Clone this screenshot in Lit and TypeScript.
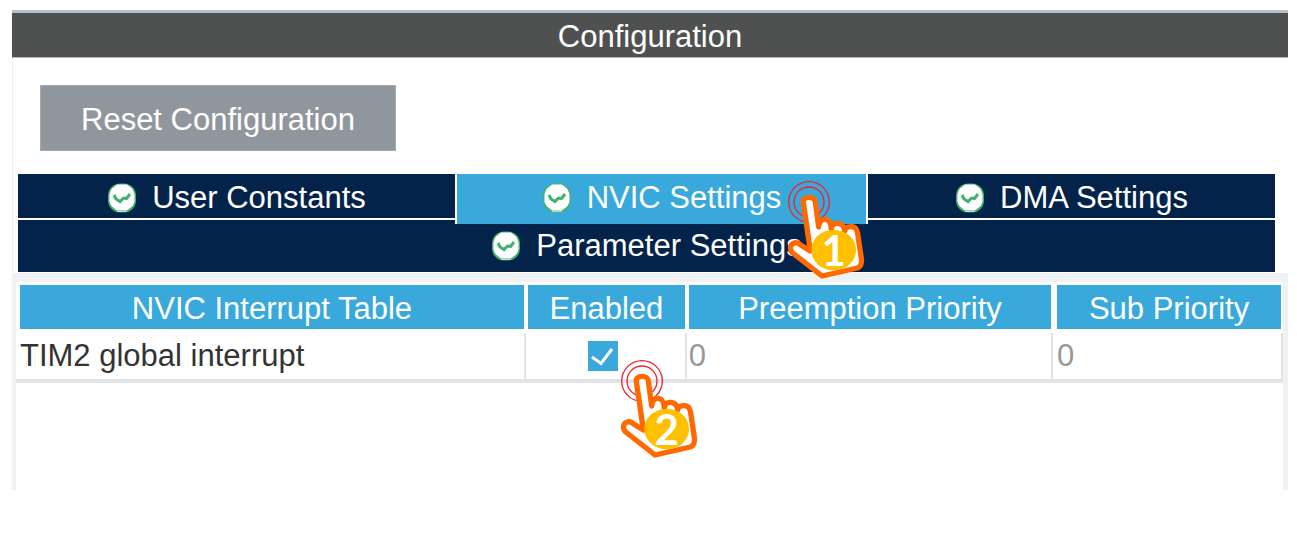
import { LitElement, html, css, svg } from "lit";
import { customElement, property, state } from "lit/decorators.js";
import { classMap } from "lit/directives/class-map.js";

/* Round green badge with a tick, shown before each tab label. */
@customElement("status-badge")
class StatusBadge extends LitElement {
  static styles = css`
    :host { display: block; width: 30px; height: 30px; flex: none; }
    svg { display: block; width: 100%; height: 100%; }
  `;
  render() {
    return html`<svg viewBox="0 0 30 30" aria-hidden="true">
      <rect x="1" y="0.500" width="28" height="29" rx="12" fill="#45b06a" />
      <path d="M10 2h10l5 4 2 5v8l-2 4-5 4H10l-5-4-2-4v-8l2-5z" fill="#fff" stroke="#fff" stroke-linejoin="round" />
      <path d="M7 12l2 4 4 2.500 3.500-3.500 3 .5 3.500-4.500" fill="none" stroke="#45b06a" stroke-width="3" />
      <path d="M10 28h10" stroke="#a9dcb9" stroke-width="2" />
    </svg>`;
  }
}

/* Pointing hand with a numbered disc, marking one step of the walkthrough. */
@customElement("step-pointer")
class StepPointer extends LitElement {
  @property() step = "";
  static styles = css`
    :host { display: block; width: 78px; height: 100px; pointer-events: none; }
    svg { display: block; width: 100%; height: 100%; overflow: visible; }
    .ring { fill: none; stroke: #f0202c; stroke-width: 4; }
    .hand { fill: #fff; stroke: #ff6900; stroke-width: 16; stroke-linejoin: round; }
    .disc { fill: #ffc000; }
    .digit { fill: #fff; font: 700 126px Lato, "Open Sans", sans-serif; text-anchor: middle; }
  `;
  render() {
    return html`<svg viewBox="0 0 234 300" role="img" aria-label="Step ${this.step}">
      ${svg`
        <circle class="ring" cx="63" cy="63" r="61"></circle>
        <circle class="ring" cx="63" cy="63" r="45"></circle>
        <path class="hand" d="M67 210L46 65C44 55 52 49 63 49C74 49 81 55 82 63L92 138C92 122 102 114 112 115C124 116 129 124 130 146C130 132 138 126 150 127C162 128 169 136 170 150C171 140 180 136 192 137C203 138 207 145 209 158L220 232C222 248 218 257 208 261L102 285L14 216C4 206 6 192 16 187C24 183 32 186 38 192Z"></path>
        <ellipse class="disc" cx="137" cy="207" rx="67" ry="61"></ellipse>
        <text class="digit" x="137" y="256">${this.step}</text>
      `}
    </svg>`;
  }
}

const TABS = ["User Constants", "NVIC Settings", "DMA Settings", "Parameter Settings"];

@customElement("app-root")
class AppRoot extends LitElement {
  @state() private active = 1;
  @state() private enabled = true;

  static styles = css`
    :host {
      display: flex;
      box-sizing: border-box;
      min-height: 100vh;
      padding: 10px 9px 45px 12px;
      background: #fff;
      font-family: "Liberation Sans", Arial, sans-serif;
      font-size: 31px;
      line-height: 36px;
      color: #333;
    }
    * { box-sizing: border-box; }
    .panel { flex: 1; min-width: 0; display: flex; flex-direction: column; }
    .title {
      margin: 0;
      padding: 6px 0 2px;
      border-top: 3px solid #b3c1c9;
      border-bottom: 1px solid #b5b6b6;
      background: #4f5150;
      color: #fff;
      font-size: 31px;
      font-weight: 400;
      text-align: center;
    }
    .toolbar { padding: 27px 27px 23px; border-left: 1px solid #f0f0f0; }
    .reset {
      display: block;
      padding: 16px 40px 12px;
      border: 1px solid #a4abb0;
      background: #8f979d;
      color: #fff;
      font: inherit;
    }
    .tabs {
      display: grid;
      grid-template-columns: 437fr 413fr 407fr;
      grid-template-rows: 44px 52px;
      row-gap: 2px;
      padding: 0 13px 1px 5px;
      border-left: 1px solid #f0f0f0;
    }
    .slot { position: relative; display: flex; }
    .slot.active { z-index: 1; margin-bottom: -6px; }
    .slot.wide { grid-column: 1 / -1; }
    .tab {
      flex: 1;
      display: flex;
      align-items: center;
      justify-content: center;
      gap: 15px;
      padding: 4px 0 0;
      border: 0;
      background: #03234b;
      color: #fff;
      font: inherit;
    }
    .active .tab {
      padding-bottom: 6px;
      border: solid #fff;
      border-width: 0 2px;
      background: #39a9dc;
    }
    .wide .tab { padding-top: 0; }
    .on-tab { position: absolute; top: 7px; right: 2px; }
    .pane {
      flex: 1;
      padding: 9px 5px 0 4px;
      background: #f0f1f3;
      display: flex;
    }
    .sheet { flex: 1; background: #fff; }
    table { width: 100%; table-layout: fixed; border-collapse: separate; border-spacing: 0; }
    .c-name { width: 40.25%; }
    .c-enabled { width: 12.7%; }
    .c-sub { width: 18.15%; }
    th {
      padding: 6px 0 2px;
      border: solid #fff;
      border-width: 3px 2px 4px;
      background: #39a9dc;
      color: #fff;
      font-weight: 400;
      text-align: center;
    }
    th:first-child, th:last-child { border-left-width: 4px; }
    td {
      padding: 5px 2px;
      border: solid #e0e4e6;
      border-width: 0 2px 4px 0;
      white-space: nowrap;
    }
    td:first-child, td:last-child { padding-left: 4px; }
    .value { color: #999; }
    .check { position: relative; }
    .box {
      appearance: none;
      display: block;
      width: 30px;
      height: 30px;
      margin: 0 auto;
      border: 1px solid #39a9dc;
      background: #fff;
    }
    .box:checked { background: #39a9dc; }
    .tick { display: grid; padding-right: 4px; justify-content: center; }
    .tick > * { grid-area: 1 / 1; }
    .tick svg { width: 30px; height: 30px; pointer-events: none; z-index: 1; }
    .on-cell { position: absolute; top: 27px; right: -14px; z-index: 1; }
  `;

  render() {
    return html`<main class="panel">
      <h1 class="title">Configuration</h1>
      <div class="toolbar"><button class="reset">Reset Configuration</button></div>
      <div class="tabs" role="tablist">
        ${TABS.map((label, i) => html`
          <div class=${classMap({ slot: true, active: i === this.active, wide: i === 3 })}>
            <button class="tab" role="tab" aria-selected=${i === this.active}
              @click=${() => (this.active = i)}>
              <status-badge></status-badge><span>${label}</span>
            </button>
            ${i === 1 ? html`<step-pointer class="on-tab" step="1"></step-pointer>` : ""}
          </div>`)}
      </div>
      <div class="pane"><div class="sheet">
        <table>
          <colgroup><col class="c-name"><col class="c-enabled"><col><col class="c-sub"></colgroup>
          <thead><tr>
            <th>NVIC Interrupt Table</th><th>Enabled</th><th>Preemption Priority</th><th>Sub Priority</th>
          </tr></thead>
          <tbody><tr>
            <td id="irq">TIM2 global interrupt</td>
            <td class="check">
              <div class="tick">
                <input class="box" type="checkbox" aria-labelledby="irq" .checked=${this.enabled}
                  @change=${() => (this.enabled = !this.enabled)}>
                ${this.enabled ? html`<svg viewBox="0 0 30 30" aria-hidden="true">
                  <path d="M4 16l9 6.500L24 8" fill="none" stroke="#fff" stroke-width="3" />
                </svg>` : ""}
              </div>
              <step-pointer class="on-cell" step="2"></step-pointer>
            </td>
            <td class="value">0</td>
            <td class="value">0</td>
          </tr></tbody>
        </table>
      </div></div>
    </main>`;
  }
}
